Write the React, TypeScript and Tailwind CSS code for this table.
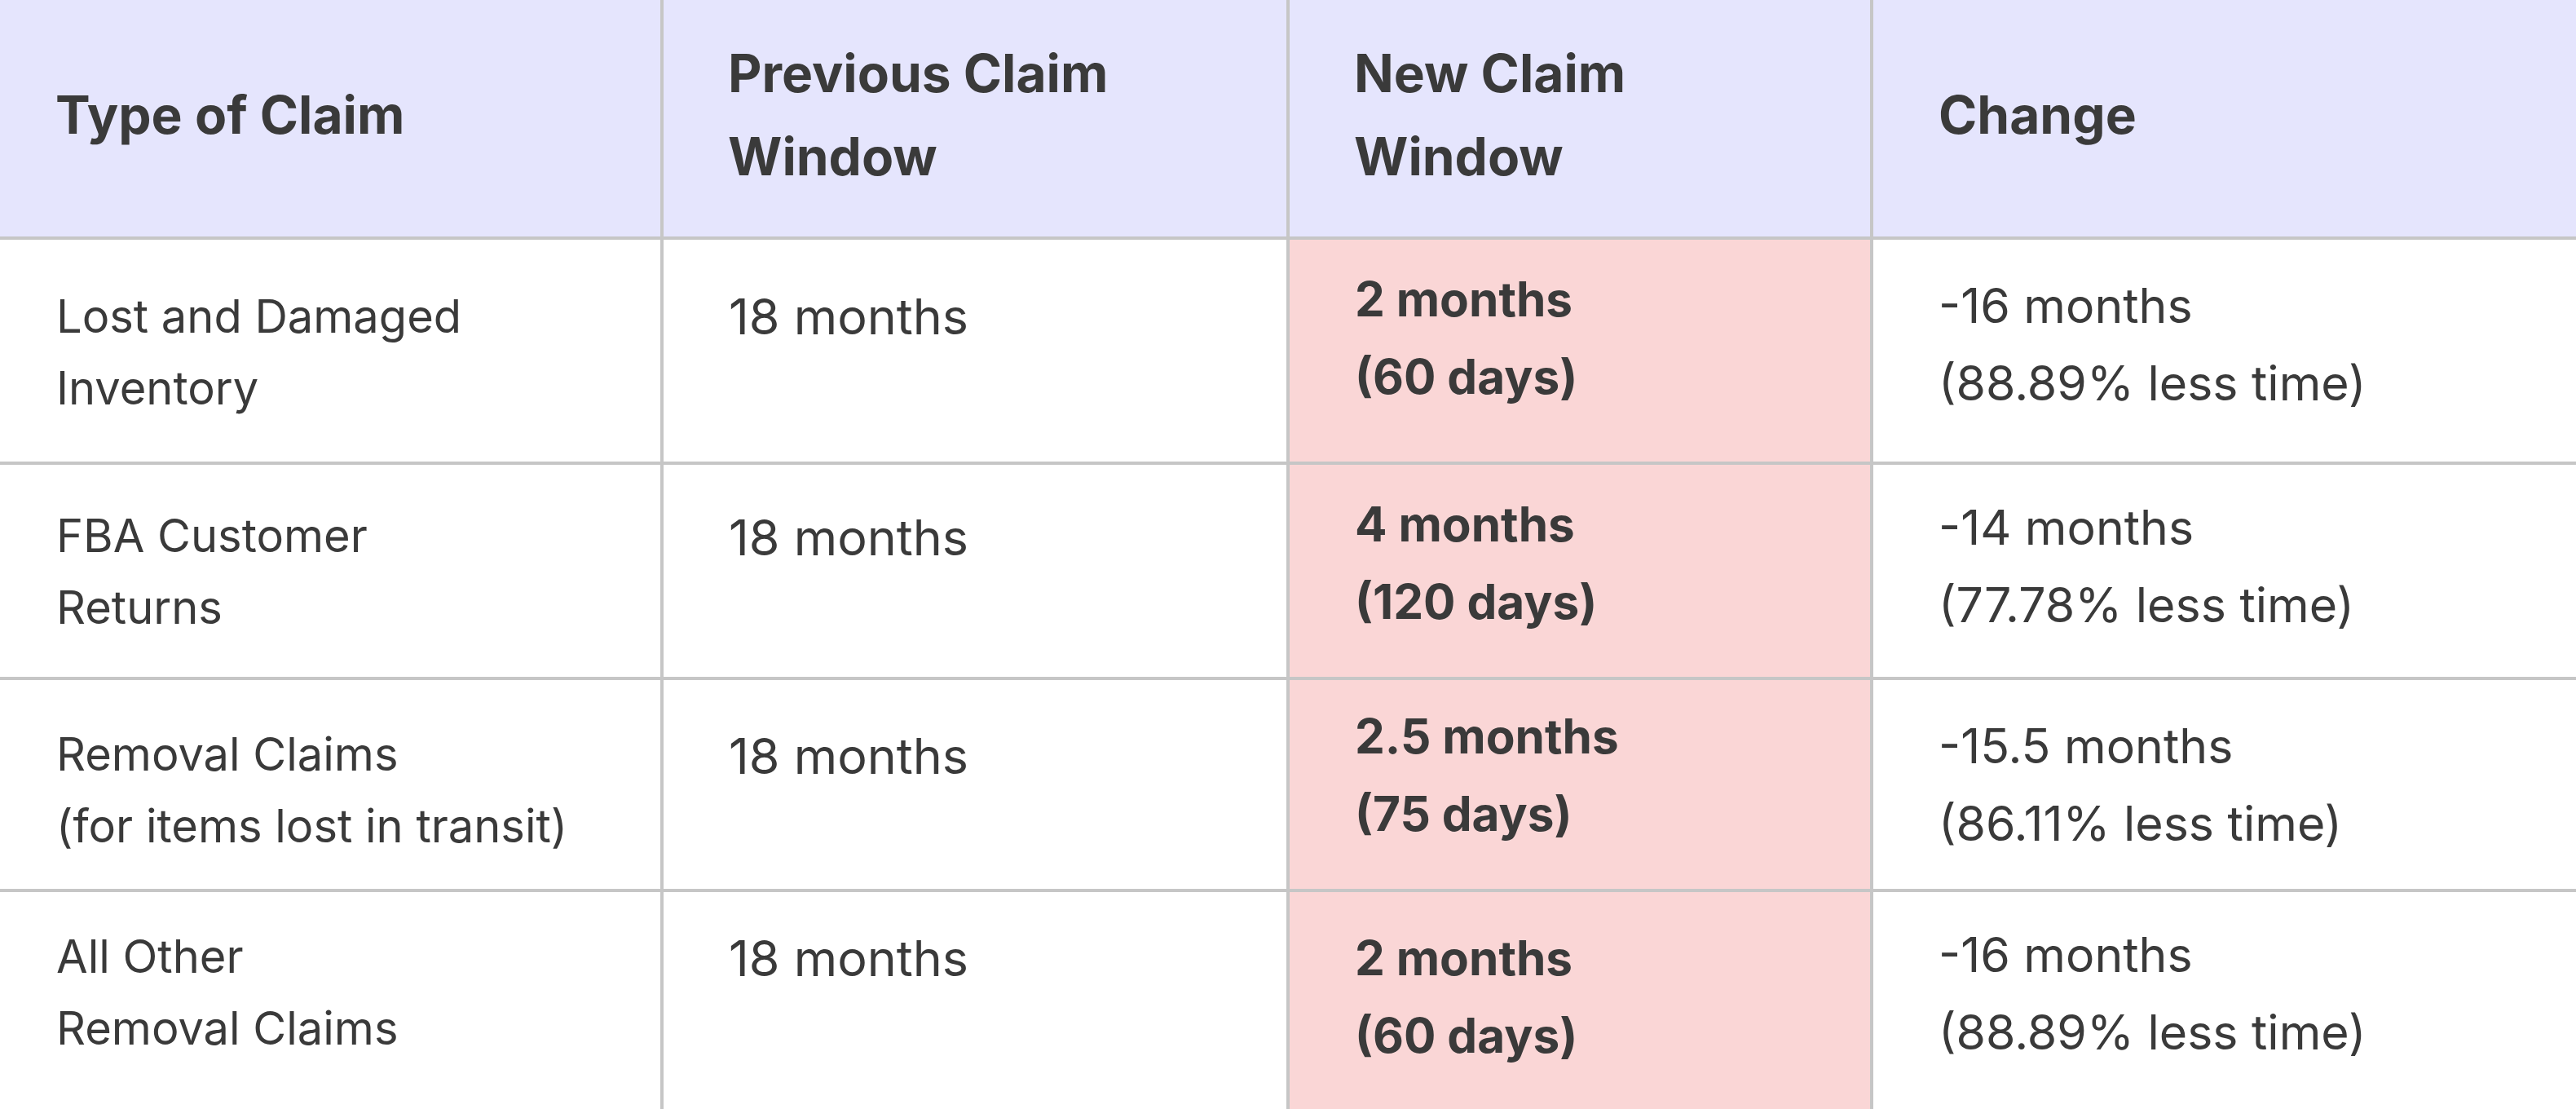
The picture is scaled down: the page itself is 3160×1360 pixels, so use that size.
import React from "react";

type Row = {
  type: string[];
  prev: string;
  next: string[];
  change: string[];
  pads: string[];
  height: string;
};

const rows: Row[] = [
  {
    type: ["Lost and Damaged", "Inventory"],
    prev: "18 months",
    next: ["2 months", "(60 days)"],
    change: ["-16 months", "(88.89% less time)"],
    pads: ["pt-[50px]", "pt-[50px]", "pt-[25px]", "pt-[33px]"],
    height: "h-[272px]",
  },
  {
    type: ["FBA Customer", "Returns"],
    prev: "18 months",
    next: ["4 months", "(120 days)"],
    change: ["-14 months", "(77.78% less time)"],
    pads: ["pt-[43px]", "pt-[45px]", "pt-[25px]", "pt-[29px]"],
    height: "h-[260px]",
  },
  {
    type: ["Removal Claims", "(for items lost in transit)"],
    prev: "18 months",
    next: ["2.5 months", "(75 days)"],
    change: ["-15.5 months", "(86.11% less time)"],
    pads: ["pt-[47px]", "pt-[49px]", "pt-[21px]", "pt-[33px]"],
    height: "h-[256px]",
  },
  {
    type: ["All Other", "Removal Claims"],
    prev: "18 months",
    next: ["2 months", "(60 days)"],
    change: ["-16 months", "(88.89% less time)"],
    pads: ["pt-[35px]", "pt-[37px]", "pt-[33px]", "pt-[29px]"],
    height: "h-[270px]",
  },
];

const Lines = ({ lines }: { lines: string[] }) => (
  <>
    {lines.map((l, i) => (
      <div key={i}>{l}</div>
    ))}
  </>
);

export default function App() {
  return (
    <div
      className="w-[3160px] h-[1360px] overflow-hidden bg-white text-[#3a3a3a]"
      style={{ fontFamily: "Inter, 'Noto Sans', sans-serif" }}
    >
      <div className="grid grid-cols-[810px_764px_712px_1fr] gap-[4px] bg-[#c6c6c6]">
        {/* header */}
        <div className="h-[290px] bg-[#e5e5fd] pl-[68px] pb-[8px] flex items-center text-[64px] font-bold leading-[102px]">
          Type of Claim
        </div>
        <div className="h-[290px] bg-[#e5e5fd] pl-[79px] pb-[8px] flex items-center text-[64px] font-bold leading-[102px]">
          <div>
            Previous Claim
            <br />
            Window
          </div>
        </div>
        <div className="h-[290px] bg-[#e5e5fd] pl-[79px] pb-[8px] flex items-center text-[64px] font-bold leading-[102px]">
          <div>
            New Claim
            <br />
            Window
          </div>
        </div>
        <div className="h-[290px] bg-[#e5e5fd] pl-[80px] pb-[8px] flex items-center text-[64px] font-bold leading-[102px]">
          Change
        </div>

        {rows.map((r, idx) => (
          <React.Fragment key={idx}>
            <div className={`${r.height} ${r.pads[0]} bg-white pl-[69px] text-[56px] leading-[88px]`}>
              <Lines lines={r.type} />
            </div>
            <div className={`${r.height} ${r.pads[1]} bg-white pl-[80px] text-[61px] leading-[88px]`}>
              {r.prev}
            </div>
            <div className={`${r.height} ${r.pads[2]} bg-[#fad6d6] pl-[80px] text-[58.5px] leading-[95px] font-bold`}>
              <Lines lines={r.next} />
            </div>
            <div className={`${r.height} ${r.pads[3]} bg-white pl-[80px] text-[59px] leading-[95px]`}>
              <Lines lines={r.change} />
            </div>
          </React.Fragment>
        ))}
      </div>
    </div>
  );
}
